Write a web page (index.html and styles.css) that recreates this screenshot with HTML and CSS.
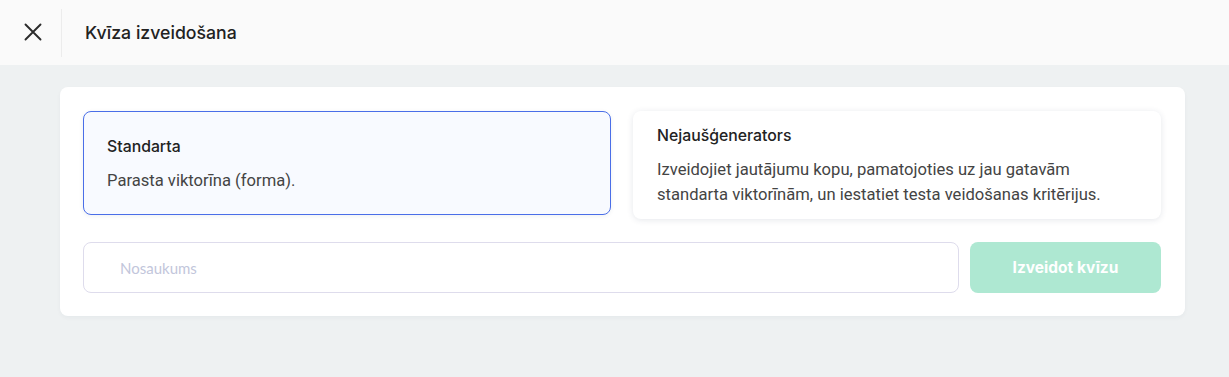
FILE: index.html
```html
<!DOCTYPE html>
<html>
	<head>
		<title>Kvīza izveidošana</title>
		<meta charset="UTF-8"/>
		<link rel="stylesheet" href="styles.css">
	</head>
	<body>
		<header class="topbar">
			<button class="close" type="button" aria-label="Aizvērt">
				<svg width="18" height="18" viewBox="0 0 18 18"><path d="M1.5 1.5 L16.5 16.5 M16.5 1.5 L1.5 16.5" stroke="#2b2b2b" stroke-width="1.9" fill="none" stroke-linecap="round"/></svg>
			</button>
			<h1 class="title">Kvīza izveidošana</h1>
		</header>
		<main class="page">
			<section class="panel">
				<div class="types">
					<div class="type selected">
						<h2>Standarta</h2>
						<p>Parasta viktorīna (forma).</p>
					</div>
					<div class="type">
						<h2>Nejaušģenerators</h2>
						<p>Izveidojiet jautājumu kopu, pamatojoties uz jau gatavām standarta viktorīnām, un iestatiet testa veidošanas kritērijus.</p>
					</div>
				</div>
				<div class="create">
					<input class="name" type="text" placeholder="Nosaukums">
					<button class="submit" type="button" disabled>Izveidot kvīzu</button>
				</div>
			</section>
		</main>
	</body>
</html>
```
FILE: styles.css
```css
html, body {
	margin: 0;
	height: 100%;
}

body {
	background-color: #eef1f2;
	font-family: Inter, "Noto Sans", sans-serif;
	color: #222;
}

/* top bar */
.topbar {
	height: 65px;
	background-color: #fafafa;
	display: flex;
	align-items: center;
}

.close {
	width: 62px;
	height: 48px;
	border: 0;
	border-right: 1px solid #ececec;
	background: none;
	padding: 0 0 2px 4px;
	display: flex;
	align-items: center;
	justify-content: center;
	cursor: pointer;
}

.title {
	margin: 0 0 0 23px;
	font-size: 17.7px;
	font-weight: 500;
	color: #222;
}

/* content */
.page {
	padding: 22px 44px 0 60px;
}

.panel {
	background: #fff;
	border-radius: 8px;
	padding: 24px 24px 23px 23px;
	box-shadow: 0 2px 4px rgba(30, 50, 70, 0.04);
}

.types {
	display: grid;
	grid-template-columns: 1fr 1fr;
	gap: 22px;
	align-items: start;
}

.type {
	border-radius: 8px;
	padding: 15px 24px 12px 24px;
	background: #fff;
	box-shadow: 0 1px 6px rgba(40, 60, 90, 0.12);
}

.type.selected {
	background: #f8faff;
	border: 1px solid #4a6ee8;
	padding: 25px 23px 21px 23px;
	box-shadow: 0 1px 4px rgba(40, 60, 90, 0.08);
}

.type h2 {
	margin: 0;
	font-size: 15.8px;
	font-weight: 500;
	line-height: 20px;
	color: #222;
}

.type p {
	margin: 11px 0 0 0;
	font-family: Roboto, "Noto Sans", sans-serif;
	font-size: 16.6px;
	line-height: 25px;
	color: #444;
}

.create {
	display: flex;
	gap: 11px;
	margin-top: 23px;
}

.name {
	flex: 1;
	height: 51px;
	box-sizing: border-box;
	border: 1px solid #dedcec;
	border-radius: 8px;
	padding: 0 36px;
	font-family: Lato, sans-serif;
	font-size: 15px;
	outline: none;
}

.name::placeholder {
	color: #c2c6db;
}

.submit {
	width: 191px;
	height: 51px;
	border: 0;
	border-radius: 8px;
	background: #aee8d2;
	color: #fff;
	font-family: Inter, sans-serif;
	font-weight: 700;
	font-size: 15.5px;
}
```
